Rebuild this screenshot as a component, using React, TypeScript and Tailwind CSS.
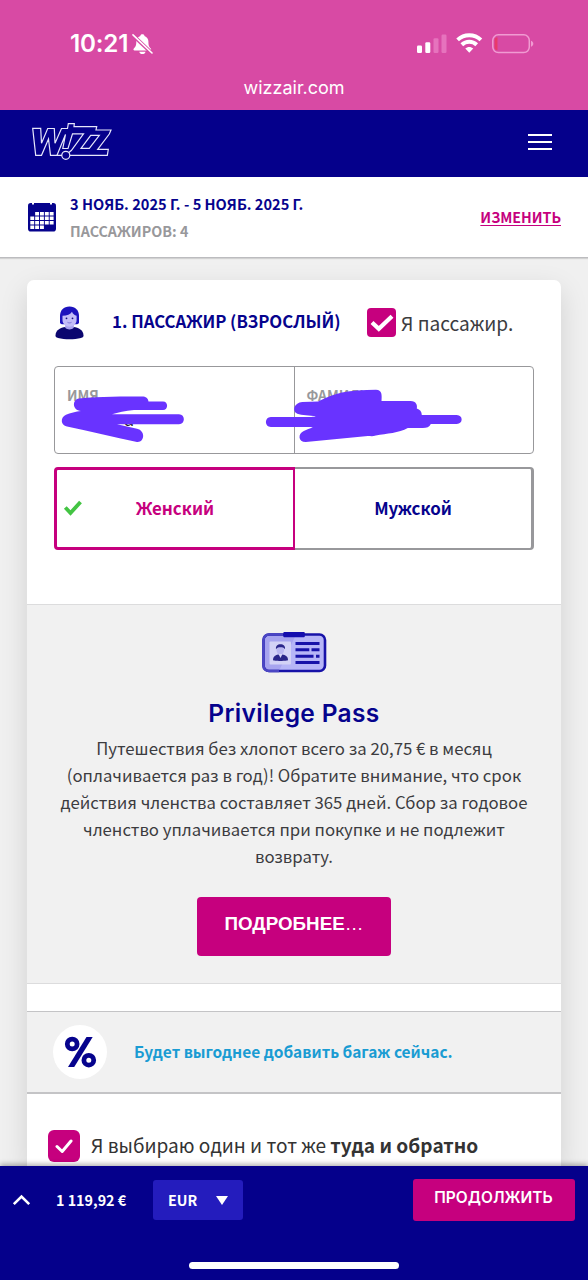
import type { ReactNode } from "react";

function StatusBar() {
  return (
    <header className="flex h-[110px] shrink-0 flex-col bg-[#d84aa4] text-white">
      <div className="flex h-[76px] shrink-0 items-end justify-between pr-[54px] pl-[70px]">
        <div className="flex h-[64px] items-center gap-[4px] font-[Inter] text-[24.2px] leading-none font-semibold">
          <span className="tracking-[-0.2px]">10:21</span>
          <svg width="21" height="22" viewBox="0 0 21 22" fill="none">
            <path d="M10.4 1.2c-1.200 0-2 .7-2.100 1.700C5.600 3.800 4.300 6 4.300 8.600c0 4.200-.9 5.400-2.500 7-.7.800-.4 1.900.8 1.900h15.400c1.200 0 1.500-1.100.8-1.900-1.600-1.600-2.400-2.800-2.400-7 0-2.600-1.400-4.800-3.900-5.700-.1-1-.9-1.700-2.100-1.700z" fill="white" />
            <path d="M7.300 18.700h6.200c-.2 1.500-1.500 2.400-3.100 2.400s-2.900-.9-3.100-2.400z" fill="white" />
            <path d="M0 1.400l20.500 19.400" stroke="#d84aa4" strokeWidth="3.600" />
            <path d="M1 1.800l19 18.200" stroke="white" strokeWidth="1.600" strokeLinecap="round" />
          </svg>
        </div>
        <div className="flex h-[64px] items-center">
          <svg width="117" height="22" viewBox="0 0 117 22" fill="none">
            <rect x="0" y="12.500" width="5" height="7.500" rx="1.200" fill="white" />
            <rect x="8.300" y="9.300" width="5" height="10.700" rx="1.200" fill="white" />
            <rect x="16.500" y="5.300" width="5" height="14.700" rx="1.200" fill="#e673bd" />
            <rect x="24.500" y="1.500" width="5" height="18.500" rx="1.200" fill="#e673bd" />
            <path d="M40.600 6.900c6.500-6.200 16.800-6.200 23.300 0" stroke="white" strokeWidth="3.900" />
            <path d="M44.800 11.800c4.300-4 10.600-4 14.900 0" stroke="white" strokeWidth="3.900" />
            <path d="M52.250 19.800l-4-4.300c2.200-2.100 5.800-2.100 8 0z" fill="white" />
            <rect x="75.800" y="1.800" width="36.500" height="17.800" rx="5.500" stroke="#f09bd2" strokeWidth="1.500" />
            <path d="M80.500 4.200v13c-1.800 0-2.900-1.200-2.900-3V7.200c0-1.800 1.100-3 2.900-3z" fill="#e83a6a" />
            <path d="M114 7.700c1.400.5 2.300 1.600 2.300 3s-.9 2.500-2.300 3z" fill="#f09bd2" />
          </svg>
        </div>
      </div>
      <div className="flex h-[24px] items-center justify-center font-[Inter] text-[18px] leading-none">wizzair.com</div>
    </header>
  );
}

function WizzLogo() {
  return (
    <svg width="82" height="40" viewBox="0 0 82 40" fill="none" stroke="#e6e6fb" strokeWidth="1.200" strokeLinejoin="miter">
      <path d="M31 34.300H26 19.500L17.500 18 10.500 34.300H4.700L1.700 7.300H9.700L10.500 22.300 16.700 7.500H23.300L24 22.300 30.500 7.500H36.500L37.300 2.700H43.300L43 5.700H65.700L65 9H80L78.300 13 66.700 28.300H77.300L76.300 34.300H39" />
      <path d="M26 34.300L34.500 13.500 31.800 27.500H37L41.500 12.800H52.500L40.300 29.500 37.800 31.500" />
      <path d="M59.700 14.300H68.300L58.300 27.300H50z" />
      <circle cx="34.800" cy="34.300" r="4" />
    </svg>
  );
}

function CalendarIcon() {
  const cells = [
    [1, 0], [2, 0], [3, 0], [4, 0],
    [0, 1], [1, 1], [2, 1], [3, 1], [4, 1],
    [0, 2], [1, 2], [2, 2], [3, 2], [4, 2],
    [0, 3], [1, 3], [2, 3],
  ];
  return (
    <svg width="28" height="30" viewBox="0 0 28 30">
      <rect y="1" width="28" height="28.500" rx="2.800" fill="#06038d" />
      <path d="M4 0v2.600h2V0zM22 0v2.600h2V0z" fill="white" />
      {cells.map(([x, y]) => (
        <rect key={`${x}-${y}`} x={2.3 + x * 4.85} y={10 + y * 4.5} width="3.900" height="3.500" fill="white" />
      ))}
    </svg>
  );
}

function TripSummary() {
  return (
    <section className="flex h-[81px] shrink-0 items-center border-b border-[#bcbcbf] bg-white pr-[27px] pb-px pl-[28px] font-bold shadow-[0_1px_1px_rgba(0,0,0,0.12)]">
      <CalendarIcon />
      <div className="ml-[14px] flex flex-1 flex-col">
        <span className="text-[14.6px] leading-[27px] text-[#06038d]">3 НОЯБ. 2025 Г. - 5 НОЯБ. 2025 Г.</span>
        <span className="text-[14.3px] leading-[27px] text-[#98989b]">ПАССАЖИРОВ: 4</span>
      </div>
      <a className="text-[14.2px] leading-[24px] text-[#c6007e] underline decoration-1 underline-offset-2">ИЗМЕНИТЬ</a>
    </section>
  );
}

function Avatar() {
  return (
    <svg width="29" height="34" viewBox="0 0 29 34">
      <path d="M14.500.5C8.500.5 5 4.500 5 10v6.200c0 1.500 1.200 2 3 2h13c1.800 0 3-.5 3-2V10C24 4.500 20.500.5 14.500.5z" fill="#1c12bd" />
      <path d="M.5 29.500C.5 24 5.500 21.500 10.500 21h8c5 .5 10 3 10 8.500 0 1.500-1 2-2.500 2.500-7 1.700-16 1.700-23 0-1.500-.5-2.500-1-2.500-2.500z" fill="#0b066f" />
      <path d="M10.200 16h8.600v5.700c-2 2.300-6.600 2.300-8.600 0z" fill="#a9a2ee" />
      <path d="M7.500 9.700c4.500 0 8-1.500 9.500-4 .7 2.300 2.400 3.300 4.600 4v4.300c0 3.800-3.300 6.700-7 6.700s-7.100-2.900-7.100-6.700z" fill="#c3bdf8" />
      <circle cx="11.500" cy="12.300" r=".9" fill="#16107e" />
      <circle cx="17.500" cy="12.300" r=".9" fill="#16107e" />
      <path d="M12.500 16.300c1.200.8 2.800.8 4 0" stroke="#6a60cf" strokeWidth=".8" fill="none" />
    </svg>
  );
}

function Field({ label, children }: { label: string; children?: ReactNode }) {
  return (
    <div className="flex-1 pt-[17px] pl-[12px]">
      <div className="text-[13.8px] leading-[22px] font-bold text-[#98989b]">{label}</div>
      {children}
    </div>
  );
}

function NameFields() {
  return (
    <div className="relative mx-[27px] flex h-[88px] shrink-0 rounded-[4px] border border-[#98989b]">
      <Field label="ИМЯ">
        <div className="pl-[57px] text-[18px] leading-[24px] text-[#222]">а</div>
      </Field>
      <div className="w-px bg-[#98989b]" />
      <Field label="ФАМИЛИЯ" />
      <svg className="absolute top-0 left-0 overflow-visible" width="480" height="86" viewBox="55 367 480 86" fill="#6933ff">
        <path d="M79 398.500C100 396.500 125 396.500 142 396.500c4 0 6 1.500 6.500 5H163c5.500 0 5.500 8.500 0 8.500h-29c-9 1-16 2.500-22 4.200h67c6.500 0 6.500 10 0 10h-62l20 4.500c9 2 7.500 14 0 13.200C114 437.500 90 431 67 426.500c-6.500-1.500-7-9-1-11.800 4-1.800 10-3 15-3.700-9-.5-9-11.500-2-12.500z" />
        <path d="M318 401.500c8-4 15-7 24-9 10-1.700 21-2.700 34-2.700 6 0 6 5.200 5.500 11.200h29c6 0 7 4.500 6.300 7.500 3 1 5 3 5 6.500h35c6.500 0 6.500 9 0 9h-26c-1.500 3-4 4-8 4h-15c-9 5-21 5.500-32 7.500-3 1-5 .5-8 .5l-62 6c-8 0-8-8.500-2-11 3-1.500 6-2.200 9-4h-42c-6.500 0-6.500-10 0-10h39c2 0 4 0 6-.7-6-.8-14-1-18.500-2.500-6-3-3-11 5-11.800z" />
      </svg>
    </div>
  );
}

function GenderPicker() {
  return (
    <div className="mx-[27px] mt-[13px] flex h-[83px] shrink-0 text-[16.9px] font-bold">
      <div className="relative flex w-[241px] items-center justify-center rounded-l-[4px] border-[3px] border-r-2 border-[#c6007e] pb-[2px] text-[#c6007e]">
        <svg className="absolute left-[6px]" width="20" height="18" viewBox="0 0 20 18">
          <path d="M2.300 8.500l5.200 5.500L17.500 3" fill="none" stroke="#43c443" strokeWidth="3.800" />
        </svg>
        Женский
      </div>
      <div className="flex flex-1 items-center justify-center rounded-r-[4px] border-y-2 border-r-[3px] border-[#98989b] pb-[2px] text-[#06038d]">Мужской</div>
    </div>
  );
}

function PassIcon() {
  return (
    <svg width="66" height="42" viewBox="0 0 66 42">
      <rect x="2.500" y="2.500" width="61.500" height="36.500" rx="5.500" fill="#b6b5f7" />
      <path d="M2.500 34.500V8c0-3 2-5.500 5.500-5.500h27L18 39H8c-3.500 0-5.500-2-5.500-4.500z" fill="#a7a4ef" />
      <rect x="2.500" y="2.500" width="61.500" height="36.500" rx="5.500" fill="none" stroke="#1712a8" strokeWidth="2.600" />
      <path d="M2.500 34V8C2.500 4.500 5 2.500 8 2.500h14M2.500 34c0 3 2.500 5 5.500 5h10" fill="none" stroke="#4b46c4" strokeWidth="2.600" />
      <rect x="22.300" y="0" width="21.500" height="5.200" rx="1" fill="#140dae" />
      <rect x="8.500" y="9.500" width="21.500" height="23" rx="1" fill="#d3d2f6" />
      <path d="M12 28c0-4 3-5 5-5.500h4.500c2.500.5 5.500 1.500 5.500 5.500 0 1.200-15 1.200-15 0z" fill="#2a2589" />
      <ellipse cx="19.300" cy="18" rx="3.800" ry="4.600" fill="#b9b6f0" />
      <path d="M15 17.200c-.5-3.200 1.600-5 4.500-5s5 1.800 4.500 5c-1.500-2-2.500-2-4.500-2s-3 0-4.500 2z" fill="#2a2589" />
      <path d="M17.500 22h4l-2 4z" fill="#d7d5f8" />
      <path d="M34.500 11.500h24M34.500 17.800h13.800M50.500 17.800h8M34.500 24.200h18M55 24.200h3.500M34.500 30.500h24" stroke="#1712a8" strokeWidth="3" />
    </svg>
  );
}

function PrivilegePass() {
  return (
    <section className="flex h-[380px] shrink-0 flex-col items-center border-y border-[#dcdcdd] bg-[#f1f1f1] pt-[27px] text-center">
      <PassIcon />
      <h2 className="mt-[21px] font-[Inter] text-[24.5px] leading-[36px] font-semibold tracking-[0.35px] text-[#06038d]">Privilege Pass</h2>
      <p className="mt-[4px] text-[16.75px] leading-[26.9px] whitespace-nowrap text-[#3c3c3f]">
        Путешествия без хлопот всего за 20,75 € в месяц
        <br />
        (оплачивается раз в год)! Обратите внимание, что срок
        <br />
        действия членства составляет 365 дней. Сбор за годовое
        <br />
        членство уплачивается при покупке и не подлежит
        <br />
        возврату.
      </p>
      <button className="mt-[27px] flex h-[59px] w-[194px] shrink-0 items-center justify-center rounded-[4px] bg-[#c6007e] pb-[4px] font-['Liberation_Sans'] text-[18.8px] font-bold text-white">
        ПОДРОБНЕЕ<span className="font-normal">…</span>
      </button>
    </section>
  );
}

function PercentIcon() {
  return (
    <div className="flex h-[54px] w-[54px] items-center justify-center rounded-full bg-white">
      <svg width="33" height="32" viewBox="0 0 33 32" fill="none" stroke="#06038d">
        <circle cx="8.200" cy="8" r="4.900" strokeWidth="4.800" />
        <circle cx="24.800" cy="24.200" r="4.900" strokeWidth="4.800" />
        <path d="M22.500 1h6.200L10.200 31H4z" fill="#06038d" stroke="none" />
      </svg>
    </div>
  );
}

function Footer() {
  return (
    <footer className="flex h-[114px] shrink-0 flex-col bg-[#05008b] text-white shadow-[0_-2px_5px_rgba(0,0,0,0.3)]">
      <div className="flex h-[68px] items-center pr-[13px] pl-[12px] text-[14.3px] font-bold">
        <svg width="19" height="12" viewBox="0 0 19 12">
          <path d="M1.800 10.200L9.500 2.500l7.700 7.700" fill="none" stroke="white" strokeWidth="2.600" />
        </svg>
        <span className="ml-[25px] w-[97px]">1 119,92 €</span>
        <button className="flex h-[40px] w-[90px] items-center rounded-[3px] bg-[#241cbd] pl-[15px]">
          EUR
          <svg className="ml-[19px]" width="12" height="9" viewBox="0 0 12 9">
            <path d="M0 0h12L6 9z" fill="white" />
          </svg>
        </button>
        <button className="ml-auto flex h-[42px] w-[162px] items-center justify-center rounded-[3px] bg-[#c6007e] pr-px pb-[4px] font-[Inter] text-[15.5px] font-semibold">ПРОДОЛЖИТЬ</button>
      </div>
      <div className="mx-auto mt-[28px] h-[7px] w-[210px] rounded-full bg-white" />
    </footer>
  );
}

export default function App() {
  return (
    <div className="flex h-[1280px] w-[588px] flex-col overflow-hidden bg-[#f0f0f0] font-['Noto_Sans_CJK_SC','Noto_Sans',sans-serif]">
      <StatusBar />
      <nav className="flex h-[67px] shrink-0 items-center justify-between bg-[#05008b] pr-[36px] pl-[31px]">
        <div className="pb-[5px]">
          <WizzLogo />
        </div>
        <div className="flex w-[24px] flex-col gap-[5px] pb-[3px]">
          <span className="h-[2px] bg-white" />
          <span className="h-[2px] bg-white" />
          <span className="h-[2px] bg-white" />
        </div>
      </nav>
      <TripSummary />
      <main className="mx-[27px] mt-[22px] flex min-h-0 flex-1 flex-col rounded-t-[7px] bg-white shadow-[0_10px_28px_rgba(0,0,0,0.13)]">
        <div className="flex h-[86px] shrink-0 items-center pl-[28px]">
          <Avatar />
          <h1 className="ml-[28px] w-[255px] pb-[2px] text-[16.75px] font-bold whitespace-nowrap text-[#06038d]">1. ПАССАЖИР (ВЗРОСЛЫЙ)</h1>
          <span className="mb-[1px] flex h-[29px] w-[29px] items-center justify-center rounded-[4px] bg-[#c6007e]">
            <svg width="24" height="18" viewBox="0 0 24 18">
              <path d="M2 8.500l6.800 6.300L22 2.300" fill="none" stroke="white" strokeWidth="4.200" />
            </svg>
          </span>
          <span className="ml-[5px] text-[19.1px] whitespace-nowrap text-[#3c3c3f]">Я пассажир.</span>
        </div>
        <NameFields />
        <GenderPicker />
        <div className="h-[54px] shrink-0" />
        <PrivilegePass />
        <section className="mt-[27px] flex h-[83px] shrink-0 items-center border-t border-b-2 border-[#c4c4c6] bg-[#f1f1f1] pl-[26px]">
          <PercentIcon />
          <span className="ml-[27px] pb-px text-[15.5px] font-bold whitespace-nowrap text-[#1a9cd3]">Будет выгоднее добавить багаж сейчас.</span>
        </section>
        <div className="mt-[35px] flex h-[34px] shrink-0 items-center pl-[21px]">
          <span className="flex h-[32px] w-[32px] items-center justify-center rounded-[6px] bg-[#c6007e]">
            <svg width="18" height="15" viewBox="0 0 18 15">
              <path d="M2 7.500l5.200 5L16 2" fill="none" stroke="white" strokeWidth="3" strokeLinecap="round" strokeLinejoin="round" />
            </svg>
          </span>
          <span className="ml-[11px] pb-[2px] text-[19.1px] whitespace-nowrap text-[#333]">
            Я выбираю один и тот же <b>туда и обратно</b>
          </span>
        </div>
      </main>
      <Footer />
    </div>
  );
}
